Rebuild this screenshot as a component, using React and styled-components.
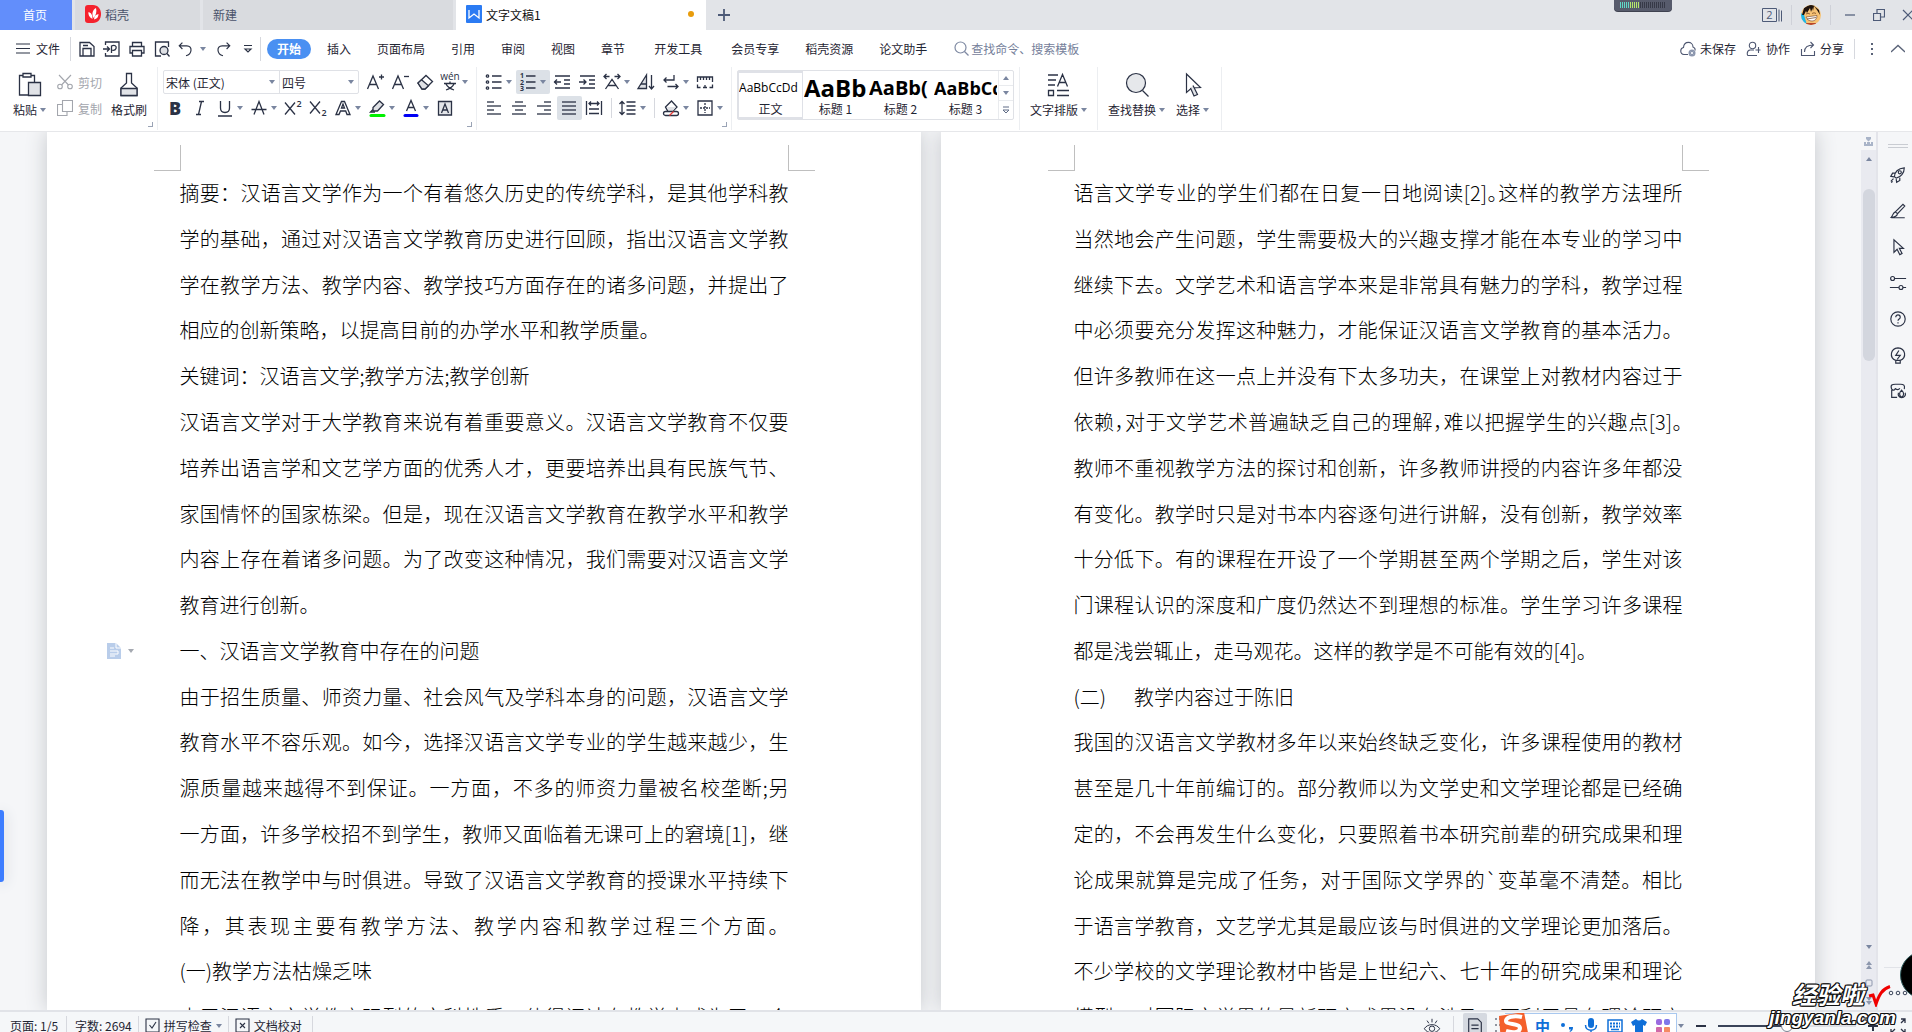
import React from 'react';
import styled, { createGlobalStyle } from 'styled-components';

const ink = '#2b3245';
const muted = '#75809a';

const GlobalStyle = createGlobalStyle`
  * { box-sizing: border-box; }
  body {
    margin: 0;
    overflow: hidden;
    color: #1f2533;
    font-family: "Noto Sans CJK SC", sans-serif;
    font-size: 12px;
  }
  button, input, select {
    margin: 0;
    padding: 0;
    border: 0;
    color: inherit;
    background: none;
    font: inherit;
    white-space: nowrap;
  }
  svg { display: block; flex: none; }
`;

const Window = styled.div`
  position: relative;
  display: flex;
  flex-direction: column;
  height: 100vh;
  overflow: hidden;
  background: #fff;
`;

/* ---------- title bar ---------- */

const TitleBar = styled.header`
  display: flex;
  flex: none;
  height: 30px;
  gap: 3px;
  overflow: hidden;
  background: #e2e4e8;
`;

const Tab = styled.button`
  display: flex;
  flex: none;
  align-items: center;
  gap: 4px;
  width: ${p => p.$width}px;
  padding: 0 12px 2px 10px;
  color: ${p => p.$color || '#49526a'};
  background: ${p => p.$bg || '#d9dbdf'};
  justify-content: ${p => (p.$center ? 'center' : 'flex-start')};
`;

const UnsavedDot = styled.i`
  width: 6px;
  height: 6px;
  margin-left: auto;
  border-radius: 50%;
  background: #e89c0c;
`;

const AddTab = styled.button`
  display: flex;
  align-items: center;
  padding: 0 9px;
`;

const WindowTools = styled.div`
  display: flex;
  flex: none;
  align-items: center;
  gap: 9px;
  margin-left: auto;
  margin-right: -6px;
`;

const WindowButton = styled.button`
  display: flex;
  justify-content: center;
  width: 20px;
`;

const Divider = styled.i`
  flex: none;
  width: 1px;
  height: ${p => p.$height || 20}px;
  margin: 0 ${p => p.$gap || 0}px;
  background: ${p => p.$color || '#d6d8de'};
`;

const Meter = styled.div`
  position: absolute;
  top: 0;
  right: 240px;
  display: flex;
  gap: 1px;
  width: 58px;
  height: 11px;
  padding: 2px 6px 3px;
  border-radius: 0 0 4px 4px;
  background: #575b6c;
  box-shadow: 0 1px 0 #3f4250;
`;

const MeterBar = styled.i`
  width: 1px;
  background: ${p => p.$color};
`;

/* ---------- menu ---------- */

const MenuRow = styled.nav`
  display: flex;
  flex: none;
  align-items: center;
  height: 37px;
  padding: 0 7px 0 16px;
`;

const FileButton = styled.button`
  display: flex;
  align-items: center;
  gap: 5px;
  margin-right: 10px;
`;

const QuickTools = styled.div`
  display: flex;
  align-items: center;
  width: 189px;
  padding-left: 3px;
`;

const QuickButton = styled.button`
  display: flex;
  flex: none;
  align-items: center;
  justify-content: center;
  width: 25px;
`;

const UndoButton = styled(QuickButton)`
  justify-content: flex-start;
  gap: 5px;
  width: 36px;
  padding-left: 3px;
`;

const MenuItem = styled.button`
  height: 20px;
  margin-left: ${p => (p.$spaced ? 3 : 0)}px;
  padding: 0 13px;
`;

const ActiveItem = styled(MenuItem)`
  margin: 0 3px 0 6px;
  padding: 0 10px;
  border-radius: 10px;
  color: #fff;
  background: #4a90f2;
  font-weight: 700;
`;

const Search = styled.label`
  display: flex;
  align-items: center;
  gap: 2px;
  margin-left: 14px;
  color: ${muted};
  input {
    width: 120px;
    outline: 0;
  }
  input::placeholder {
    color: ${muted};
    opacity: 1;
  }
`;

const Account = styled.div`
  display: flex;
  align-items: center;
  gap: 10px;
  margin-left: auto;
`;

const AccountButton = styled.button`
  display: flex;
  align-items: center;
  gap: 4px;
`;

/* ---------- ribbon ---------- */

const Ribbon = styled.div`
  display: flex;
  flex: none;
  height: 65px;
  border-bottom: 1px solid #e6e7ea;
`;

const Group = styled.section`
  position: relative;
  display: flex;
  flex: none;
  height: 63px;
  padding: 2px ${p => p.$right || 5}px 0 ${p => p.$left || 5}px;
  border-right: 1px solid #eceef1;
`;

const Launcher = styled.button`
  position: absolute;
  right: 4px;
  bottom: 3px;
  width: 5px;
  height: 5px;
  border: solid #9aa3b5;
  border-width: 0 1px 1px 0;
`;

const Row = styled.div`
  display: flex;
  align-items: center;
  height: 26px;
`;

const Tool = styled.button`
  display: flex;
  flex: none;
  align-items: center;
  justify-content: flex-start;
  width: ${p => (p.$split ? 34 : 25)}px;
  height: 24px;
  padding-left: 2px;
  gap: 2px;
  border-radius: 2px;
  background: ${p => (p.$on ? '#dce1e7' : 'none')};
`;

const ClipTools = styled.div`
  padding: 0 9px 0 11px;
`;

const SmallTool = styled.button`
  display: flex;
  align-items: center;
  gap: 5px;
  height: 26px;
  color: #a3a6ad;
`;

const BigTool = styled.button`
  display: flex;
  flex-direction: column;
  align-items: center;
  justify-content: space-between;
  height: 50px;
  padding-top: 3px;
  line-height: 18px;
  span {
    display: flex;
    align-items: center;
    gap: 3px;
  }
  & + & { margin-left: 11px; }
`;

const Combos = styled.div`
  display: flex;
  height: 24px;
  margin-right: 4px;
  border: 1px solid #dfe1e6;
  border-radius: 2px;
`;

const Combo = styled.label`
  display: flex;
  align-items: center;
  width: ${p => p.$width}px;
  padding: 0 4px 0 2px;
  & + & { border-left: 1px solid #dfe1e6; }
  select {
    flex: 1;
    min-width: 0;
    appearance: none;
    outline: 0;
  }
`;

const Gallery = styled.div`
  display: flex;
  height: 50px;
  margin-top: 1px;
  border: 1px solid #dfe1e6;
  border-radius: 2px;
`;

const StyleCard = styled.button`
  display: flex;
  flex-direction: column;
  align-items: center;
  width: 65px;
  overflow: hidden;
  border: solid ${p => (p.$on ? '#dfe1e7' : 'transparent')};
  border-width: 2px 1px;
  line-height: 16px;
`;

const Sample = styled.b`
  width: 100%;
  height: 28px;
  overflow: hidden;
  color: #000;
  font-family: "Open Sans", "Noto Sans", sans-serif;
  font-size: ${p => p.$size}px;
  font-weight: ${p => p.$weight || 700};
  line-height: 30px;
  text-align: left;
`;

const GalleryNav = styled.div`
  display: grid;
  width: 15px;
  border-left: 1px solid #e9ebee;
  button {
    display: flex;
    align-items: center;
    justify-content: center;
  }
  button + button { border-top: 1px solid #e9ebee; }
`;

/* ---------- document ---------- */

const Workspace = styled.main`
  display: flex;
  flex: 1;
  min-height: 0;
`;

const Desk = styled.div`
  display: flex;
  flex: 1;
  min-width: 0;
  justify-content: center;
  gap: 20px;
  overflow: hidden;
  background: #f5f6f8;
`;

const Sheet = styled.article`
  flex: 0 0 874px;
  min-width: 0;
  padding: 13px 132px 0 133px;
  background: #fff;
  box-shadow: 0 0 20px #c4c7cb;
`;

const Margins = styled.div`
  display: flex;
  justify-content: space-between;
  height: 26px;
  margin: 0 -26px;
`;

const Corner = styled.i`
  width: 27px;
  border: solid #bfbfbf;
  border-width: ${p => (p.$right ? '0 0 1px 1px' : '0 1px 1px 0')};
`;

const Body = styled.div`
  display: grid;
  grid-template-columns: minmax(0, 1fr);
  grid-auto-rows: 1fr;
  height: 870px;
  color: #000;
  font-size: 20px;
  font-weight: 300;
  line-height: 43px;
`;

const Line = styled.div`
  position: relative;
  white-space: nowrap;
  text-align: justify;
  text-align-last: ${p => (p.$ragged ? 'left' : 'justify')};
  font-feature-settings: ${p => (p.$tight ? '"halt"' : 'normal')};
`;

const Numbered = styled(Line)`
  display: flex;
  gap: 28px;
`;

const OutlineMark = styled.button`
  position: absolute;
  left: -73px;
  top: 14px;
  display: flex;
  align-items: center;
  gap: 7px;
`;

const ScrollBar = styled.div`
  display: flex;
  flex: none;
  flex-direction: column;
  align-items: center;
  width: 15px;
  background: #e9eaf0;
`;

const ScrollCap = styled.button`
  display: flex;
  align-items: center;
  justify-content: center;
  width: 100%;
  height: 18px;
  background: ${p => (p.$light ? '#f5f6f8' : 'none')};
`;

const Thumb = styled.i`
  width: 12px;
  height: 172px;
  margin: 21px 0 auto;
  border-radius: 6px;
  background: #d3d6de;
`;

const SidePanel = styled.aside`
  display: flex;
  flex: none;
  flex-direction: column;
  align-items: center;
  gap: 16px;
  width: 36px;
  padding: 12px 0 0 6px;
  overflow: hidden;
  border-left: 2px solid #e3e4ea;
  background: #f5f6f8;
`;

const Grip = styled.i`
  width: 20px;
  height: 4px;
  margin-bottom: 1px;
  border: solid #c9ccd2;
  border-width: 1px 0;
`;

const SideButton = styled.button`
  width: 20px;
  height: 20px;
  svg { margin: 0 auto; }
`;

const More = styled.button`
  width: 100%;
  height: 43px;
  margin-top: auto;
  border-top: 1px solid #e1e3e8;
  svg { margin: 6px auto 0; }
`;

/* ---------- status bar ---------- */

const StatusBar = styled.footer`
  flex: none;
  height: 22px;
  overflow: hidden;
  border-top: 2px solid #e1e3e8;
  background: #f5f7f9;
`;

const StatusInner = styled.div`
  display: flex;
  align-items: center;
  height: 27px;
  padding-left: 10px;
`;

const StatusButton = styled.button`
  display: flex;
  align-items: center;
  gap: 4px;
`;

const ViewButton = styled.button`
  display: flex;
  align-items: center;
  justify-content: center;
  width: 24px;
  height: 26px;
  border-radius: 2px;
  background: ${p => (p.$on ? '#d5d9e0' : 'none')};
`;

const StatusRight = styled.div`
  display: flex;
  align-items: center;
  margin-left: auto;
  padding-right: 6px;
`;

const Ime = styled.div`
  display: flex;
  align-items: center;
  gap: 3px;
  height: 26px;
  padding-right: 3px;
  border: 1px solid #a9c8ef;
  border-left: 0;
  background: #fff;
  color: #0f6fd8;
  font-size: 15px;
  font-weight: 700;
`;

const ImeKey = styled.button`
  display: flex;
  align-items: center;
  justify-content: center;
  width: 21px;
`;

const ZoomTools = styled.div`
  display: flex;
  align-items: center;
  gap: 11px;
  margin-left: 1px;
`;

const Zoom = styled.input`
  appearance: none;
  width: 138px;
  height: 14px;
  &::-webkit-slider-runnable-track {
    height: 2px;
    background: linear-gradient(90deg, #3a4459 50%, #dcdfe4 50%);
  }
  &::-webkit-slider-thumb {
    appearance: none;
    width: 12px;
    height: 12px;
    margin-top: -5px;
    border: 1px solid #7b8191;
    border-radius: 50%;
    background: #fff;
  }
`;

/* ---------- things floating over the window ---------- */

const EdgeHandle = styled.button`
  position: absolute;
  left: 0;
  top: 810px;
  width: 4px;
  height: 72px;
  border-radius: 0 3px 3px 0;
  background: #3d7dff;
  box-shadow: 0 2px 14px #c3c8d2;
`;

const FloatBall = styled.i`
  position: absolute;
  right: -36px;
  bottom: 33px;
  width: 48px;
  height: 48px;
  border: 1px solid #2f5a5c;
  border-radius: 50%;
  background: #000;
`;

const Watermark = styled.div`
  position: absolute;
  right: 16px;
  bottom: 3px;
  color: #fff;
  font-family: "Liberation Sans", "Noto Sans CJK SC", sans-serif;
  font-size: 19px;
  font-style: italic;
  font-weight: 700;
  line-height: 22px;
  text-align: right;
  text-shadow: 1px 0 #111, -1px 0 #111, 0 1px #111, 0 -1px #111,
    1px 1px #111, -1px -1px #111, 1px -1px #111, -1px 1px #111;
`;

const WatermarkTop = styled.div`
  display: flex;
  align-items: center;
  justify-content: flex-end;
  gap: 3px;
  padding-right: 5px;
  font-size: 24px;
`;

/* ---------- icons ---------- */

const Icon = ({ size = 20, box = 20, width = 1.3, color = ink, children }) => (
  <svg width={size} height={size} viewBox={`0 0 ${box} ${box}`} fill="none" stroke={color} strokeWidth={width} aria-hidden="true">
    {children}
  </svg>
);

const Caret = ({ up, color = '#7a86a0' }) => (
  <svg width="6" height="4" viewBox="0 0 6 4" fill={color} aria-hidden="true">
    <path d={up ? 'M0 4h6L3 0z' : 'M0 0h6L3 4z'} />
  </svg>
);

const Glyph = ({ x = 10, y = 16, size = 16, weight = 400, color = ink, children }) => (
  <text x={x} y={y} fontSize={size} fontWeight={weight} fill={color} stroke="none" textAnchor="middle" fontFamily='"Open Sans", sans-serif'>
    {children}
  </text>
);

const quickIcons = {
  保存: <path d="M3 3.500h9.500l4.500 4v9.500H3zM6 17V9.500h8V17M6 6.500h5" />,
  输出为PDF: <path d="M3.500 6V3h13.500v14H3.500v-3M1 10h6M5 7.500 7.500 10 5 12.500M9.500 14V7c3-1.500 5.500 0 4.500 2.500-.8 2-3 2-4.500 1.500" />,
  打印: <path d="M5.500 7.500V3.500h9v4M5.500 14H3V7.500h14V14h-2.500M5.500 11.500h9V17h-9z" />,
  打印预览: (
    <>
      <path d="M9 17H3.500V3h13v5M15 14.500l2.500 3" />
      <circle cx="12" cy="11.500" r="4" fill="#dfe1e5" />
    </>
  ),
};

const Bars = ({ rows }) => rows.map(([x1, x2], i) => <path key={i} d={`M${x1} ${4 + i * 4}H${x2}`} />);

const fontIconsTop = [
  ['增大字号', <><path d="M2.500 17 8 4l5.500 13M4.500 12.500h7" /><path d="M14 5h5M16.500 2.500v5" /></>],
  ['减小字号', <><path d="M2.500 17 8 4l5.500 13M4.500 12.500h7" /><path d="M14 4.500h5" /></>],
  ['清除格式', <><path d="m3 11 8-7.500 6.500 6L10 17H7z" fill="#fff" /><path d="m6.500 7.800 7 6L10 17H7l-4-6z" fill="#dfe1e5" /></>],
  ['拼音指南', <><Glyph y="8" size="10">wén</Glyph><path d="M4 11.500h12M10 9.500v2M6 12c1.500 3 5 5 8 6M14 12c-1.500 3-5 5-8 6" /></>, true],
];

const fontIconsBottom = [
  ['加粗', <Glyph size="18" weight="800" y="17">B</Glyph>],
  ['倾斜', <path d="M9 3.500h5M6 16.500h5M11.500 3.500 8.500 16.500" />],
  ['下划线', <path d="M5.500 3v7c0 6 9 6 9 0V3M3 18h14" />, true],
  ['删除线', <path d="M5 16.500 10 3.500l5 13M2.500 11.500h15" />, true],
  ['上标', <><path d="m2 4.500 10 12M12 4.500l-10 12" /><Glyph x="16" y="9" size="9" weight="600">2</Glyph></>],
  ['下标', <><path d="m2 3.500 10 12M12 3.500l-10 12" /><Glyph x="16" y="18" size="9" weight="600">2</Glyph></>],
  ['文字效果', <><path d="M3 16.500 8.500 3.500h3L17 16.500h-3l-1.300-3.500H7.500L6 16.500z" fill="#fff" /><path d="m8.500 10 1.500-4 1.500 4z" /></>, true],
  ['突出显示', <><path d="m6 9.500 6.500-6.500 4 3.500-6 6.500H6z" fill="#dfe1e5" /><path d="M6 11.500 3.500 14H8" /><path d="M4 17.500h13" stroke="#00f000" strokeWidth="3" strokeLinecap="round" /></>, true],
  ['字体颜色', <><path d="M5.500 13 10 2.500 14.500 13M7 9.500h6" /><path d="M4 17.500h12" stroke="#0000f5" strokeWidth="3" strokeLinecap="round" /></>, true],
  ['字符底纹', <><path d="M3.500 3.500h13v13.500h-13z" fill="#e3e5e9" /><path d="m6.500 15 3.500-9 3.500 9M7.800 12h4.400" /></>],
];

const paraIconsTop = [
  ['项目符号', <><path d="M8 4h9.500M8 10h9.500M8 16h9.500" /><circle cx="3.500" cy="4" r="1.200" /><circle cx="3.500" cy="10" r="1.200" /><circle cx="3.500" cy="16" r="1.200" /></>, true],
  ['编号', <><path d="M8 4h9.500M8 10h9.500M8 16h9.500" /><Glyph x="4" y="6" size="7" weight="700">1</Glyph><Glyph x="4" y="12.500" size="7" weight="700">2</Glyph><Glyph x="4" y="19" size="7" weight="700">3</Glyph></>, true, true],
  ['减少缩进', <path d="M3 4h15M12 8h6M12 12h6M3 16h15M2 10h7M5 7.500 2.500 10 5 12.500" />],
  ['增加缩进', <path d="M3 4h15M12 8h6M12 12h6M3 16h15M2 10h7M6.500 7.500 9 10l-2.500 2.500" />],
  ['中文版式', <path d="m3.500 17 6.500-9.500 6.500 9.500M6 13.500h8M2 4.500h5.500M12.500 4.500H18M4.500 2 2 4.500 4.500 7M15.500 2 18 4.500 15.500 7" />, true],
  ['排序', <><path d="M2 16.500 10.500 3v13.500zM5 12h5.500" fill="#dfe1e5" /><path d="M15.500 3v13.500M13 14l2.500 3 2.500-3" /></>],
  ['显示段落标记', <path d="M13 3v5H3M5.500 5.500 3 8l2.500 2.500M6.500 14.500H17M14.500 12l2.500 2.500-2.500 2.500" />, true],
  ['制表位', <path d="M2.500 10V5h15v5M5.500 5v3M8.500 5v3M11.500 5v3M14.500 5v3M2.500 12.500v3h3M8 15.500h4M10 13v2.500M14.500 15.500h3v-3" />],
];

const alignIcons = [
  ['左对齐', <Bars rows={[[3, 10], [3, 17], [3, 10], [3, 17]]} />],
  ['居中对齐', <Bars rows={[[6, 14], [3, 17], [6, 14], [3, 17]]} />],
  ['右对齐', <Bars rows={[[10, 17], [3, 17], [10, 17], [3, 17]]} />],
  ['两端对齐', <Bars rows={[[3, 17], [3, 17], [3, 17], [3, 17]]} />, false, true],
  ['分散对齐', <path d="M2.500 3v14M17.500 3v14M5 5.500h10M7 3.500 5 5.500l2 2M13 3.500l2 2-2 2M5 11h10M5 15.500h10" />],
];

const spacingIcon = [
  ['行距', <path d="M8.500 4h9M8.500 8h9M8.500 12h9M8.500 16h9M4 3.500v13M1.500 6 4 3.500 6.500 6M1.500 14 4 16.500 6.500 14" />, true],
];

const fillIcons = [
  ['底纹颜色', <><path d="m4.500 9 6-6 5.500 6-4.500 4.500H7z" fill="#fff" /><path d="M6 9h9l-3.500 4.500H8z" fill="#dfe1e5" stroke="none" /><rect x="2.500" y="13.500" width="15" height="4" rx="2" fill="#fff" /><path d="m8.500 17.500 4-4" stroke="#e53935" /></>, true],
  ['边框', <><path d="M3 3h14v14H3z" /><path d="M10 5v10M5 10h10" strokeDasharray="2 1" /></>, true],
];

const ToolSet = ({ items }) => items.map(([name, art, split, on]) => (
  <Tool key={name} title={name} $split={split} $on={on}>
    <Icon>{art}</Icon>
    {split && <Caret />}
  </Tool>
));

const sideIcons = {
  推荐: <><path d="M6 12c0-5 4-9.500 11-10 0 6-4 10.500-9 11.500zM7 8H4L2 11.500l3.500.5M12 13v3l-3.500 2-.5-3.500" /><circle cx="12" cy="7" r="1.700" /><path d="m5 14-3 3M4 17l-1.500 1.500" /></>,
  画笔: <path d="m7 11 8.500-8.500 2 2L9.500 13 7 11c-3 1-2.500 4-4.500 6 3 0 6.500-1 7-4M2.500 17.500h15" />,
  选择: <path d="M5.500 2v14l3.500-3.500 3 6 2.500-1.200-3-5.800H16z" />,
  属性: <><circle cx="4" cy="5" r="2.200" /><path d="M6 5h13M1 15h10M15.500 15H19" /><circle cx="13.300" cy="15" r="2.200" /></>,
  帮助: <><circle cx="10" cy="10" r="8" /><path d="M7.500 8c0-3.500 5-3.500 5 0 0 2-2.500 2-2.500 4M10 13.500V15" /></>,
  灵感: <><path d="M7.500 16C0 13 1.500 2.500 10 2c8.500.5 10 11 2.500 14v3h-5zM7.500 16h5" /><path d="m11 5-3.500 5.500h5L9 15" /></>,
  素材: <><path d="M3 8c-2-5 1-5.500 4-5.500h6c3 0 5 1 4 5.500M3 8c1.500 2 4 1 4-1 1 2 4 2 5 0M3 9v8h6" /><path d="M14 9c-3 3-3 6 0 8 3-2 3-5 0-8zM10.500 12c-1 3 1 5 3.500 5.500M18 12c1 3-1 5-4 5.500" /></>,
};

/* ---------- text ---------- */

const pageOne = [
  ['摘要：汉语言文学作为一个有着悠久历史的传统学科，是其他学科教'],
  ['学的基础，通过对汉语言文学教育历史进行回顾，指出汉语言文学教'],
  ['学在教学方法、教学内容、教学技巧方面存在的诸多问题，并提出了'],
  ['相应的创新策略，以提高目前的办学水平和教学质量。', 'end'],
  ['关键词：汉语言文学;教学方法;教学创新', 'end'],
  ['汉语言文学对于大学教育来说有着重要意义。汉语言文学教育不仅要'],
  ['培养出语言学和文艺学方面的优秀人才，更要培养出具有民族气节、'],
  ['家国情怀的国家栋梁。但是，现在汉语言文学教育在教学水平和教学'],
  ['内容上存在着诸多问题。为了改变这种情况，我们需要对汉语言文学'],
  ['教育进行创新。', 'end'],
  ['一、汉语言文学教育中存在的问题', 'heading'],
  ['由于招生质量、师资力量、社会风气及学科本身的问题，汉语言文学'],
  ['教育水平不容乐观。如今，选择汉语言文学专业的学生越来越少，生'],
  ['源质量越来越得不到保证。一方面，不多的师资力量被名校垄断;另'],
  ['一方面，许多学校招不到学生，教师又面临着无课可上的窘境[1]，继'],
  ['而无法在教学中与时俱进。导致了汉语言文学教育的授课水平持续下'],
  ['降，其表现主要有教学方法、教学内容和教学过程三个方面。'],
  ['(一)教学方法枯燥乏味', 'end'],
  ['由于汉语言文学教育强烈的文科性质，使得阅读在教学中成为了一个'],
];

const pageTwo = [
  ['语言文学专业的学生们都在日复一日地阅读[2]。这样的教学方法理所', 'tight'],
  ['当然地会产生问题，学生需要极大的兴趣支撑才能在本专业的学习中'],
  ['继续下去。文学艺术和语言学本来是非常具有魅力的学科，教学过程'],
  ['中必须要充分发挥这种魅力，才能保证汉语言文学教育的基本活力。'],
  ['但许多教师在这一点上并没有下太多功夫，在课堂上对教材内容过于'],
  ['依赖，对于文学艺术普遍缺乏自己的理解，难以把握学生的兴趣点[3]。', 'tight'],
  ['教师不重视教学方法的探讨和创新，许多教师讲授的内容许多年都没'],
  ['有变化。教学时只是对书本内容逐句进行讲解，没有创新，教学效率'],
  ['十分低下。有的课程在开设了一个学期甚至两个学期之后，学生对该'],
  ['门课程认识的深度和广度仍然达不到理想的标准。学生学习许多课程'],
  ['都是浅尝辄止，走马观花。这样的教学是不可能有效的[4]。', 'end'],
  ['(二)|教学内容过于陈旧', 'numbered'],
  ['我国的汉语言文学教材多年以来始终缺乏变化，许多课程使用的教材'],
  ['甚至是几十年前编订的。部分教师以为文学史和文学理论都是已经确'],
  ['定的，不会再发生什么变化，只要照着书本研究前辈的研究成果和理'],
  ['论成果就算是完成了任务，对于国际文学界的`变革毫不清楚。相比'],
  ['于语言学教育，文艺学尤其是最应该与时俱进的文学理论更加落后。'],
  ['不少学校的文学理论教材中皆是上世纪六、七十年的研究成果和理论'],
  ['模型，对国际文学界的最新研究成果没有涉及，不利于具有理论研究'],
];

const Page = ({ lines }) => (
  <Sheet>
    <Margins><Corner /><Corner $right /></Margins>
    <Body>
      {lines.map(([text, kind]) => {
        if (kind === 'numbered') {
          return <Numbered key={text} $ragged>{text.split('|').map(t => <span key={t}>{t}</span>)}</Numbered>;
        }
        return (
          <Line key={text} $ragged={kind === 'end' || kind === 'heading'} $tight={kind === 'tight'}>
            {kind === 'heading' && (
              <OutlineMark title="段落布局">
                <svg width="14" height="16" viewBox="0 0 14 16" fill="#b9cdea">
                  <path d="M0 0h9l5 5v11H0z" />
                  <path d="M9 0v5h5M3 5h4M3 8h8M3 11h8v-3M3 13h5" stroke="#fff" fill="none" />
                </svg>
                <Caret color="#a5a9b1" />
              </OutlineMark>
            )}
            {text}
          </Line>
        );
      })}
    </Body>
  </Sheet>
);

const menuItems = ['插入', '页面布局', '引用', '审阅', '视图', '章节', '开发工具', '会员专享', '稻壳资源', '论文助手'];

const meterColors = Array.from({ length: 23 }, (_, i) => (i < 5 ? '#5fd8c8' : i < 10 ? '#b5e86a' : '#363947'));

const App = () => (
  <>
    <GlobalStyle />
    <Window>
      <TitleBar>
        <Tab $width={72} $bg="#628efb" $color="#fff" $center>首页</Tab>
        <Tab $width={125}>
          <svg width="16" height="18" viewBox="0 0 16 18">
            <path d="M0 3c0-2 1-3 3-3h5c5 0 8 4 8 9s-3 9-8 9H3c-2 0-3-1-3-3z" fill="#f5222d" />
            <path d="M7.500 14C4 12 3 9.500 3.500 7c3 1 4 3 4 7zM8.500 13C6.500 9 7.500 5 11 3c1 4 0 7-2.500 10zM9 14.500c0-3 1.500-5 4.500-5.500 0 3-1.500 5-4.500 5.500z" fill="#fff" />
          </svg>
          稻壳
        </Tab>
        <Tab $width={250}>新建</Tab>
        <Tab $width={250} $bg="#fff" $color="#111">
          <svg width="16" height="18" viewBox="0 0 16 18">
            <rect width="16" height="18" rx="1" fill="#2b7bf3" />
            <path d="M3 5v8l5-4 5 4V5" stroke="#fff" strokeWidth="1.300" fill="none" />
          </svg>
          文字文稿1
          <UnsavedDot />
        </Tab>
        <AddTab title="新建标签">
          <Icon size={12} box={12} width={1.8} color="#4d5a77"><path d="M6 0v12M0 6h12" /></Icon>
        </AddTab>
        <WindowTools>
          <WindowButton title="窗口列表">
            <Icon color="#4d5a77" width={1}>
              <path d="M.5 3.500h14v13H.5zM17 4.500v12M19.500 5.500v11" />
              <Glyph x="7.500" y="14" size="11" color="#4d5a77">2</Glyph>
            </Icon>
          </WindowButton>
          <Divider $color="#cfd1d8" />
          <WindowButton title="账号">
            <svg width="20" height="20" viewBox="0 0 20 20">
              <clipPath id="face"><circle cx="10" cy="10" r="10" /></clipPath>
              <g clipPath="url(#face)">
                <rect width="20" height="20" fill="#f6c274" />
                <path d="M0 8l3 2 3 10H0z" fill="#18b7ec" />
                <path d="M1 10 3 3 10-1l4 2-2 1-2 5-1-4-3 5-1-2-2 4z" fill="#20150f" />
                <path d="m13 1 5 4 1 5-3-5zM11 2l1 4 1-5z" fill="#20150f" />
                <path d="m5 12 11-1.500c0 3.500-2 5.500-5 5.500s-5-1.500-6-4z" fill="#fff" stroke="#6b3d1c" strokeWidth=".6" />
                <path d="M5 9q2-1.500 4 0M11 8.500q2-1.500 4 0M6 14l9-1.500" stroke="#6b3d1c" strokeWidth=".7" fill="none" />
                <path d="M5 18h10v2H5z" fill="#b7442a" />
              </g>
            </svg>
          </WindowButton>
          <Divider $color="#cfd1d8" />
          <WindowButton title="最小化"><Icon size={12} box={12} width={1.2} color="#4d5a77"><path d="M1 6h10" /></Icon></WindowButton>
          <WindowButton title="还原"><Icon size={12} box={12} width={1.2} color="#4d5a77"><path d="M.5 4.500h7v7h-7zM4 4V.5h7.500V8H8" /></Icon></WindowButton>
          <WindowButton title="关闭"><Icon size={12} box={12} width={1.2} color="#4d5a77"><path d="m1 1 10 10M11 1 1 11" /></Icon></WindowButton>
        </WindowTools>
      </TitleBar>

      <MenuRow>
        <FileButton>
          <Icon size={15} box={15} width={1.2}><path d="M0 3h14M0 7.500h14M0 12h14" /></Icon>
          文件
        </FileButton>
        <Divider $height={24} />
        <QuickTools>
          {Object.entries(quickIcons).map(([name, art]) => (
            <QuickButton key={name} title={name}><Icon>{art}</Icon></QuickButton>
          ))}
          <UndoButton title="撤销">
            <Icon size={18}><path d="M6 3 2.500 6.500 6 10M2.500 6.500H11c6.500 0 6 9.500-1 11" /></Icon>
            <Caret />
          </UndoButton>
          <QuickButton title="恢复"><Icon size={18}><path d="M14 3l3.500 3.500L14 10M17.500 6.500H9c-6.500 0-6 9.500 1 11" /></Icon></QuickButton>
          <QuickButton title="自定义快速访问工具栏"><Icon size={10} box={10} width={1.2}><path d="M1 1.500h8M2 5h6L5 8z" /></Icon></QuickButton>
        </QuickTools>
        <Divider $height={24} />
        <ActiveItem>开始</ActiveItem>
        {menuItems.map(item => (
          <MenuItem key={item} $spaced={item === '开发工具' || item === '会员专享'}>{item}</MenuItem>
        ))}
        <Search>
          <Icon size={15} box={15} width={1.2} color="#7f8aa3"><circle cx="6.500" cy="6.500" r="5.500" /><path d="m10.500 10.500 4 4" /></Icon>
          <input aria-label="查找命令" placeholder="查找命令、搜索模板" />
        </Search>
        <Account>
          <AccountButton>
            <Icon size={16} box={16} width={1.1} color="#4d5670">
              <path d="M8 13.500H4C-.5 13 0 7 3.500 6.500 4-.5 13 0 13 6c1.500.5 2.500 2 2 3.500" />
              <circle cx="12" cy="12" r="3.500" fill="#8b96ae" stroke="none" />
              <path d="m10.800 10.800 2.400 2.400M13.200 10.800l-2.400 2.400" stroke="#fff" strokeWidth=".8" />
            </Icon>
            未保存
          </AccountButton>
          <AccountButton>
            <Icon size={16} box={16} width={1.1} color="#4d5670"><circle cx="6.500" cy="4.500" r="3.200" /><path d="M8 9H4C.5 9.500 1 14.500 2 14.500h9M12.500 6v6M9.500 9h5" /></Icon>
            协作
          </AccountButton>
          <AccountButton>
            <Icon size={16} box={16} width={1.1} color="#4d5670"><path d="M1.500 8v6.500h13V10M4.500 11c0-5 3-7 9-7M10.500 1 13.500 4l-3 3" /></Icon>
            分享
          </AccountButton>
          <Divider />
          <AccountButton title="更多">
            <svg width="16" height="14" viewBox="0 0 16 14" fill="#5a6378"><path d="M6 1h2v2H6zM6 6h2v2H6zM6 11h2v2H6z" /></svg>
          </AccountButton>
          <AccountButton title="折叠功能区"><Icon size={14} box={14} color="#5a6378"><path d="m0 10 7-6.500L14 10" /></Icon></AccountButton>
        </Account>
      </MenuRow>

      <Ribbon>
        <Group $left={13} $right={10}>
          <BigTool>
            <svg width="26" height="26" viewBox="0 0 26 26" fill="none" stroke={ink} strokeWidth="1.300">
              <path d="M12 23H2.500V3.500h15V10" />
              <path d="M6 1.500h8v3.500H6z" fill="#fff" />
              <path d="M11.500 10.500h12v13h-12z" fill="#e1e3e7" />
            </svg>
            <span>粘贴<Caret /></span>
          </BigTool>
          <ClipTools>
            <SmallTool disabled>
              <Icon size={16} box={16} width={1.1} color="#a3a6ad"><path d="m2 1 9.500 10M14 1 4.500 11" /><circle cx="3" cy="12.500" r="2.300" /><circle cx="13" cy="12.500" r="2.300" /></Icon>
              剪切
            </SmallTool>
            <SmallTool disabled>
              <Icon size={16} box={16} width={1.1} color="#a3a6ad"><path d="M5.500.5h10v11h-10zM5 4.500H.5v11h9.500V12" /></Icon>
              复制
            </SmallTool>
          </ClipTools>
          <BigTool>
            <svg width="26" height="26" viewBox="0 0 26 26" fill="none" stroke={ink} strokeWidth="1.300">
              <path d="M10.500 1.500h5V11l5.500 5v7.500H5V16l5.500-5z" />
              <path d="M5 16.500h16v7H5z" fill="#e1e3e7" />
            </svg>
            格式刷
          </BigTool>
          <Launcher title="剪贴板" />
        </Group>

        <Group $right={4}>
          <div>
            <Row>
              <Combos>
                <Combo $width={115}>
                  <select aria-label="字体"><option>宋体 (正文)</option></select>
                  <Caret />
                </Combo>
                <Combo $width={79}>
                  <select aria-label="字号"><option>四号</option></select>
                  <Caret />
                </Combo>
              </Combos>
              <ToolSet items={fontIconsTop} />
            </Row>
            <Row><ToolSet items={fontIconsBottom} /></Row>
          </div>
          <Launcher title="字体" />
        </Group>

        <Group $right={4}>
          <div>
            <Row><ToolSet items={paraIconsTop} /></Row>
            <Row>
              <ToolSet items={alignIcons} />
              <Divider $gap={4} />
              <ToolSet items={spacingIcon} />
              <Divider $gap={4} />
              <ToolSet items={fillIcons} />
            </Row>
          </div>
          <Launcher title="段落" />
        </Group>

        <Group>
          <Gallery>
            <StyleCard $on><Sample $size={12} $weight={400}>AaBbCcDd</Sample>正文</StyleCard>
            <StyleCard><Sample $size={24}>AaBb</Sample>标题 1</StyleCard>
            <StyleCard><Sample $size={20}>AaBb(</Sample>标题 2</StyleCard>
            <StyleCard><Sample $size={18}>AaBbCc</Sample>标题 3</StyleCard>
            <GalleryNav>
              <button title="上一行"><Caret up /></button>
              <button title="下一行"><Caret /></button>
              <button title="其他样式"><Icon size={8} box={8} width={1} color="#5f6b85"><path d="M1 1h6M1 4h6L4 7z" /></Icon></button>
            </GalleryNav>
          </Gallery>
        </Group>

        <Group $left={10} $right={10}>
          <BigTool>
            <svg width="26" height="26" viewBox="0 0 26 26" fill="none" stroke={ink} strokeWidth="1.300">
              <path d="M2 3h10M2 8h8M2 13h7M11.500 14.500l5-12 5 12M13.500 10.500h6M2.500 18.500h5v5h-5zM11 18.500h12M11 23.500h12" />
            </svg>
            <span>文字排版<Caret /></span>
          </BigTool>
        </Group>

        <Group $left={10} $right={12}>
          <BigTool>
            <svg width="26" height="26" viewBox="0 0 26 26" fill="none" stroke={ink} strokeWidth="1.200">
              <circle cx="12" cy="11" r="9.500" fill="#e6e8eb" />
              <path d="m18.500 18.500 6 6" />
            </svg>
            <span>查找替换<Caret /></span>
          </BigTool>
          <BigTool>
            <svg width="26" height="26" viewBox="0 0 26 26" fill="none" stroke={ink} strokeWidth="1.200">
              <path d="M6.500 2v18.500l5-4.500 9-.5z" />
              <path d="m13 13.500 4.500 9-3.500 1.500-3.500-8" fill="#e1e3e7" />
            </svg>
            <span>选择<Caret /></span>
          </BigTool>
        </Group>
      </Ribbon>

      <Workspace>
        <Desk>
          <Page lines={pageOne} />
          <Page lines={pageTwo} />
        </Desk>
        <ScrollBar>
          <ScrollCap title="标尺" $light>
            <svg width="9" height="9" viewBox="0 0 9 9" fill="#a9b4c8"><path d="M2 0h5v2L4.500 4.500 2 2zM0 5h2v2h1V5h3v2h1V5h2v4H0z" /></svg>
          </ScrollCap>
          <ScrollCap title="向上滚动"><Caret up /></ScrollCap>
          <Thumb />
          <ScrollCap title="向下滚动"><Caret /></ScrollCap>
          <ScrollCap title="上一页"><svg width="6" height="8" viewBox="0 0 6 8" fill="#8d97ad"><path d="M0 4h6L3 0zM0 8h6L3 4z" /></svg></ScrollCap>
          <ScrollCap title="选择浏览对象"><Icon size={8} box={8} width={1} color="#8d97ad"><rect x="1" y="1" width="6" height="6" rx="1" /></Icon></ScrollCap>
          <ScrollCap title="下一页"><svg width="6" height="8" viewBox="0 0 6 8" fill="#8d97ad"><path d="M0 0h6L3 4zM0 4h6L3 8z" /></svg></ScrollCap>
        </ScrollBar>
        <SidePanel>
          <Grip />
          {Object.entries(sideIcons).map(([name, art]) => (
            <SideButton key={name} title={name}><Icon size={18}>{art}</Icon></SideButton>
          ))}
          <More title="更多">
            <svg width="20" height="34" viewBox="0 0 20 34" fill="none" stroke="#3a4459"><circle cx="3" cy="18" r="1.800" /><circle cx="10" cy="18" r="1.800" /><circle cx="17" cy="18" r="1.800" /></svg>
          </More>
        </SidePanel>
      </Workspace>

      <StatusBar>
        <StatusInner>
          <StatusButton>页面: 1/5</StatusButton>
          <Divider $gap={8} />
          <StatusButton>字数: 2694</StatusButton>
          <Divider $gap={6} />
          <StatusButton>
            <Icon size={15} box={15} width={1.1}><path d="M1 1h13v13H1zM4.500 7l2.500 3 4-6" /></Icon>
            拼写检查
            <Caret />
          </StatusButton>
          <Divider $gap={6} />
          <StatusButton>
            <Icon size={15} box={15} width={1.1}><path d="M1 1h13v13H1zM5 5l5 5M10 5l-5 5" /></Icon>
            文档校对
          </StatusButton>
          <Divider $gap={10} />
          <StatusRight>
            <ViewButton title="护眼模式">
              <Icon size={18} width={1.1}><path d="M1.500 13C5 7 15 7 18.500 13 15 19 5 19 1.500 13zM10 2v4M4.500 4l2 3M15.500 4l-2 3" /><circle cx="10" cy="13" r="3" /></Icon>
            </ViewButton>
            <Divider $gap={9} />
            <ViewButton title="页面视图" $on>
              <Icon size={18}><path d="M3 2h10l4 4v12H3zM6 9h8M6 13h8" /></Icon>
            </ViewButton>
            <Ime>
              <svg width="42" height="26" viewBox="0 0 42 26">
                <rect width="18" height="26" fill="#f5f7f9" />
                <path d="M8 6h2M8 12h2M8 18h2M12 6h3M12 12h3" stroke={ink} />
                <path d="m12 3 25-4 5 26-28 5z" fill="#f4602c" />
                <path d="M35 4c-8-2-16 0-16 4s14 2 14 7-8 5-14 3" stroke="#fff" strokeWidth="4" fill="none" />
              </svg>
              <ImeKey title="中英文切换">中</ImeKey>
              <ImeKey title="标点"><svg width="14" height="14" viewBox="0 0 14 14" fill="#0f6fd8"><circle cx="3" cy="6" r="2" /><path d="M9 8h4c0 3-1 4-3 5l-.5-1c1-.5 1.500-1 1.500-1.500H9z" /></svg></ImeKey>
              <ImeKey title="语音"><svg width="14" height="16" viewBox="0 0 14 16" fill="#0f6fd8"><rect x="4" y="0" width="6" height="10" rx="3" /><path d="M1.500 7c0 7 11 7 11 0M7 12v3M4 15h6" stroke="#0f6fd8" strokeWidth="1.500" fill="none" /></svg></ImeKey>
              <ImeKey title="键盘"><svg width="16" height="14" viewBox="0 0 16 14" fill="none" stroke="#0f6fd8"><rect x="1" y="1" width="14" height="12" strokeWidth="1.500" /><path d="M3 4.500h10M3 7.500h10" strokeWidth="2" strokeDasharray="2 1" /><path d="M4 10.500h8" strokeWidth="1.500" /></svg></ImeKey>
              <ImeKey title="皮肤"><svg width="16" height="14" viewBox="0 0 16 14" fill="#0f6fd8"><path d="M5 0q3 3 6 0l5 3-2 4-2-1v8H4V6L2 7 0 3z" /></svg></ImeKey>
              <ImeKey title="工具箱"><svg width="14" height="14" viewBox="0 0 14 14"><rect width="6" height="6" rx="2" fill="#9a6be0" /><rect x="8" width="6" height="6" rx="2" fill="#7f78ea" /><rect y="8" width="6" height="6" rx="1" fill="#d069a8" /><rect x="8" y="8" width="6" height="6" rx="1" fill="#f58a63" /></svg></ImeKey>
            </Ime>
            <ZoomTools>
              <StatusButton title="显示比例"><Caret /></StatusButton>
              <StatusButton title="缩小"><Icon size={12} box={12} width={2}><path d="M1 6h10" /></Icon></StatusButton>
              <Zoom type="range" aria-label="缩放" defaultValue="50" />
              <StatusButton title="放大"><Icon size={12} box={12} width={2}><path d="M1 6h10M6 1v10" /></Icon></StatusButton>
              <StatusButton title="全屏"><Icon size={16} box={16}><path d="M1 5V1h4M11 1h4v4M1 11v4h4M15 11v4h-4M1 1l4 4M15 1l-4 4M1 15l4-4M15 15l-4-4" /></Icon></StatusButton>
            </ZoomTools>
          </StatusRight>
        </StatusInner>
      </StatusBar>

      <Meter>{meterColors.map((c, i) => <MeterBar key={i} $color={c} />)}</Meter>
      <EdgeHandle title="展开导航" />
      <Watermark>
        <WatermarkTop>
          经验啦
          <svg width="24" height="22" viewBox="0 0 24 22" fill="none" stroke="#f00000" strokeWidth="3"><path d="m2 11 4-1 3 9C12 10 15 4 23 1.500" /></svg>
        </WatermarkTop>
        jingyanla.com
      </Watermark>
      <FloatBall />
    </Window>
  </>
);

export default App;
